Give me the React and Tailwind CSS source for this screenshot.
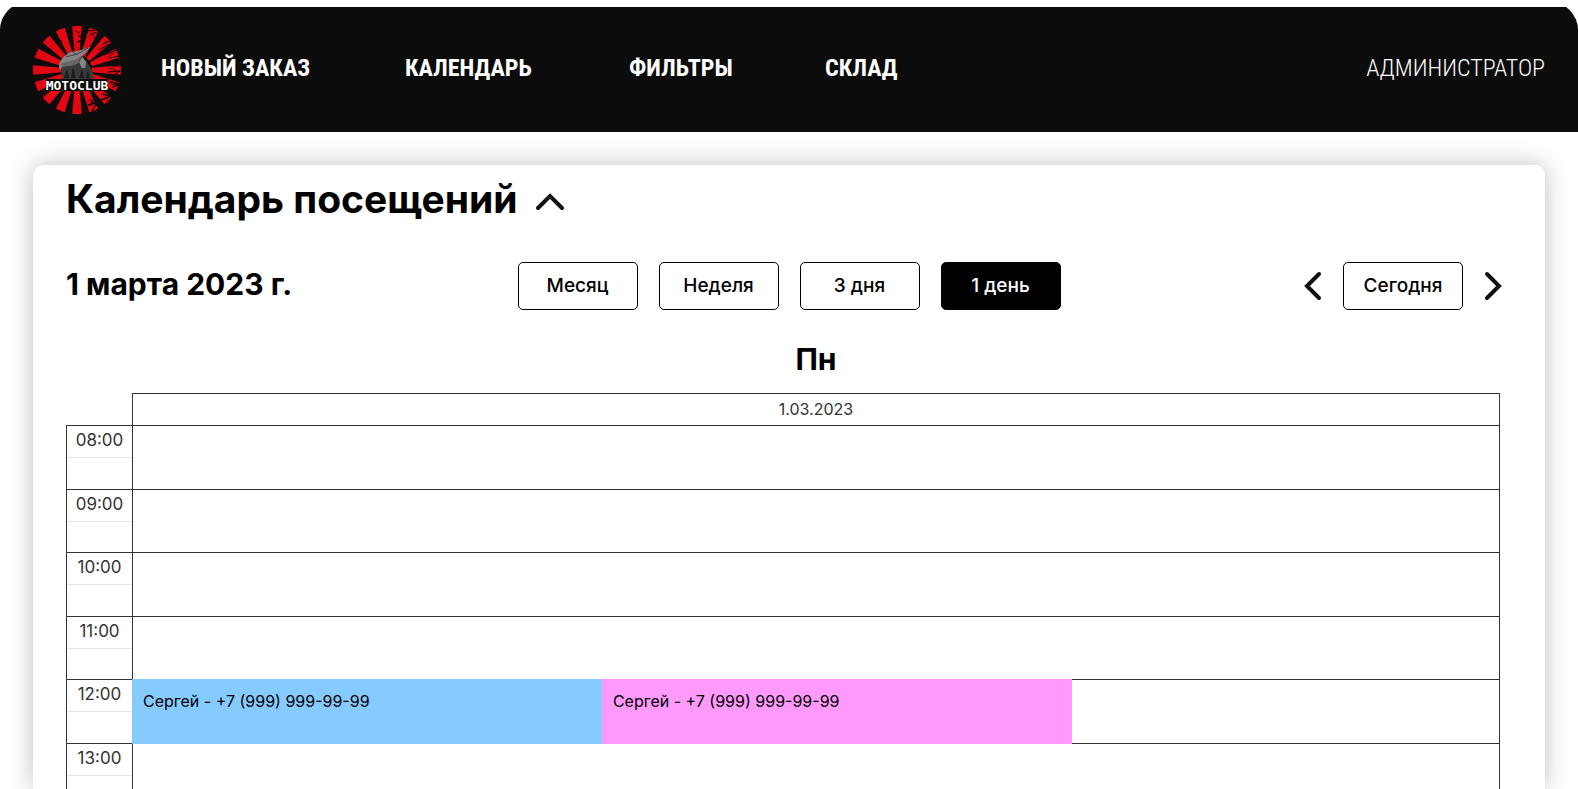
const NAV = [
  { label: "НОВЫЙ ЗАКАЗ", width: "w-61" },
  { label: "КАЛЕНДАРЬ", width: "w-56" },
  { label: "ФИЛЬТРЫ", width: "w-49" },
  { label: "СКЛАД", width: "w-auto" },
];

const VIEWS = ["Месяц", "Неделя", "3 дня", "1 день"];

const HOURS = ["08:00", "09:00", "10:00", "11:00", "12:00", "13:00"];

const EVENTS = {
  "12:00": [
    { text: "Сергей - +7 (999) 999-99-99", color: "bg-[#85cbff]" },
    { text: "Сергей - +7 (999) 999-99-99", color: "bg-[#ff99fc]" },
  ],
};

const RAYS = Array.from({ length: 16 }, (_, i) => i * 22.5);

function Logo() {
  return (
    <svg viewBox="-44 -44 88 88" className="size-22 shrink-0" role="img" aria-label="Motoclub">
      <g fill="#e30613">
        {RAYS.map((angle) => (
          <path key={angle} d="M-2.2 -15 L-4.8 -43.7 Q0 -44.4 4.8 -43.7 L2.2 -15 Z" transform={`rotate(${angle})`} />
        ))}
      </g>
      {/* worn paint on the right-hand rays */}
      <g stroke="#0c0c0c" fill="none" strokeLinecap="round">
        <path strokeWidth="1" d="M12 -39l6 -1M13 -35l7 -3M20 -30l9 -6M25 -34l7 -2M26 -26l9 -4M22 -20l12 -7M31 -21l9 -3M27 -15l15 -6M33 -12l10 -2M36 -4l8 0M31 2l12 -1M38 4l5 -3" />
        <path strokeWidth="1.4" d="M33 12l10 2M36 17l6 -3M29 19l6 4M26 24l9 3M24 30l8 -3M13 30l7 5M11 35l8 -2M15 41l4 -7M2 -34l4 1M1 -28l4 -2" />
        <path strokeWidth="0.7" d="M-22 -32l7 3M-34 -22l7 1M-2 -39l5 2M14 -38l3 5M30 -29l-5 4M36 -17l-6 5M40 1l-9 -4M34 15l7 -1M17 28l-4 8M29 27l2 3" />
      </g>
      <path fill="#393939" d="M-17 -4 L-14 10 H17 L15 0 L9 -10 L0 -9 Z" />
      <path fill="#1c1c1c" d="M-13 8l3 -9 2 9zM-6 8l2 -11 3 11zM2 8l3 -9 2 9zM9 8l2 -8 2 8z" />
      <path fill="#858585" d="M-18 -3 C-18 -8 -15 -12 -11 -15 C-8 -18 -4 -19 1 -19 L13 -23 C11 -19 8 -17 5 -14 L9 -8 L8 -2 L5 -2 L2 -8 C-3 -3 -10 -5 -15 -3 L-17 0 Z" />
      <path fill="#666" d="M-16 -6 C-11 -10 -4 -8 1 -12 L5 -14 L2 -8 C-3 -3 -10 -5 -15 -3 Z" />
      <path stroke="#3a3a3a" strokeWidth="0.9" fill="none" d="M-11 -13 C-6 -15 -1 -14 11 -22 M5 -14 L2 -8 M-4 -18 L0 -15" />
      <rect x="-31" y="9" width="62" height="12" fill="#0c0c0c" />
      <text x="0" y="20" textAnchor="middle" fill="#fff" fontFamily="DejaVu Sans Mono, monospace" fontWeight="700" fontSize="13">
        MOTOCLUB
      </text>
    </svg>
  );
}

function Chevron({ d, box, className, stroke }) {
  return (
    <svg viewBox={box} className={className} fill="none" stroke="#111" strokeWidth={stroke} strokeLinecap="round" strokeLinejoin="miter" aria-hidden="true">
      <path d={d} />
    </svg>
  );
}

function PillButton({ active, children }) {
  return (
    <button
      type="button"
      aria-pressed={active}
      className={
        "h-12 w-30 rounded-[5px] border border-black text-[19px] font-medium " +
        (active ? "bg-black text-white" : "bg-white text-black")
      }
    >
      {children}
    </button>
  );
}

export default function App() {
  return (
    <div className="flex h-screen flex-col overflow-hidden bg-white pt-[7px] font-['Inter','Noto_Sans',sans-serif] text-black">
      <header className="shrink-0 overflow-hidden">
        <div className="-mt-[5px] flex h-[130px] items-center rounded-t-[28px] bg-[#0c0c0c] px-[33px] pt-[5px] font-['Liberation_Sans_Narrow','Roboto_Condensed','DejaVu_Sans_Condensed',sans-serif] text-2xl text-white">
          <a href="#home">
            <Logo />
          </a>
          <div className="flex flex-1 items-center justify-between pb-1 pl-10">
            <nav>
              <ul className="flex font-bold">
                {NAV.map((item) => (
                  <li key={item.label} className={item.width}>
                    <a href="#nav" className="whitespace-nowrap">{item.label}</a>
                  </li>
                ))}
              </ul>
            </nav>
            <a href="#account" className="font-light">АДМИНИСТРАТОР</a>
          </div>
        </div>
      </header>

      <main className="mx-[33px] mt-[33px] flex min-h-0 flex-1 flex-col rounded-t-[10px] bg-white px-[33px] pt-[10px] shadow-[0_0_24px_rgba(0,0,0,0.25)]">
        <div className="flex items-center gap-[17px]">
          <h1 className="text-[39px] leading-[48px] font-bold">Календарь посещений</h1>
          <button type="button" aria-label="Свернуть календарь" className="pt-1">
            <Chevron box="0 0 30 20" className="h-5 w-[30px]" stroke="4" d="M3 17 L15 5 L27 17" />
          </button>
        </div>

        <div className="mt-[39px] grid grid-cols-[1fr_auto_1fr] items-center">
          <h2 className="pb-1 text-[30px] leading-10 font-bold">1 марта 2023 г.</h2>
          <div className="flex gap-[21px]">
            {VIEWS.map((view) => (
              <PillButton key={view} active={view === "1 день"}>{view}</PillButton>
            ))}
          </div>
          <div className="flex items-center justify-end gap-5 pr-[9px]">
            <button type="button" aria-label="Назад">
              <Chevron box="0 0 20 32" className="h-8 w-5" stroke="4" d="M16 4 L4 16 L16 28" />
            </button>
            <PillButton>Сегодня</PillButton>
            <button type="button" aria-label="Вперёд">
              <Chevron box="0 0 20 32" className="h-8 w-5" stroke="4" d="M4 4 L16 16 L4 28" />
            </button>
          </div>
        </div>

        <div className="mt-7 mr-3 min-h-0 flex-1 overflow-y-auto [scrollbar-width:none]">
          <table className="w-full table-fixed border-collapse">
            <colgroup>
              <col className="w-[66px]" />
              <col />
            </colgroup>
            <thead>
              <tr>
                <td />
                <th scope="col" className="h-[55px] pb-3 text-[30px] leading-10 font-bold">Пн</th>
              </tr>
              <tr>
                <td />
                <td className="h-8 border border-[#333] text-center text-[16px] leading-6 text-[#333]">1.03.2023</td>
              </tr>
            </thead>
            <tbody>
              {HOURS.map((hour) => (
                <tr key={hour} className="odd:h-16 even:h-[63px]">
                  <th scope="row" className="border border-[#333] p-0 align-top text-[17px] font-normal text-[#333]">
                    <div className="h-8 border-b border-[#e5e5e5] leading-7">{hour}</div>
                  </th>
                  <td className="relative border border-[#333] p-0">
                    {EVENTS[hour] && (
                      <div className="absolute -inset-px flex">
                        {EVENTS[hour].map((event, i) => (
                          <div key={i} className={"w-[34.35%] px-[11px] py-2 text-[16px] leading-7 " + event.color}>
                            {event.text}
                          </div>
                        ))}
                      </div>
                    )}
                  </td>
                </tr>
              ))}
            </tbody>
          </table>
        </div>
      </main>
    </div>
  );
}
